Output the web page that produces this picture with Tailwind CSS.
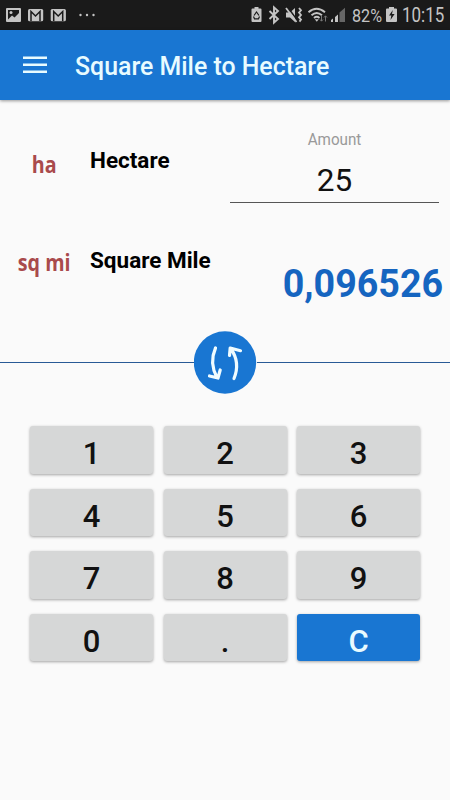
<!DOCTYPE html>
<html lang="en">
<head>
<meta charset="utf-8">
<title>Square Mile to Hectare</title>
<script src="https://cdn.jsdelivr.net/npm/@tailwindcss/browser@4"></script>
</head>
<body class="w-[450px] h-[800px] overflow-hidden bg-[#fafafa] font-[Roboto,sans-serif] flex flex-col">
<div class="h-[30px] shrink-0 bg-[#1a1a1a]">
  <div class="flex h-[30px] items-center text-[#c4c4c4]">
    <svg class="shrink-0" width="345" height="30" viewBox="0 0 345 30" fill="#c4c4c4">
      <path fill-rule="evenodd" d="M7 8h13a1 1 0 0 1 1 1v12a1 1 0 0 1-1 1H7a1 1 0 0 1-1-1V9a1 1 0 0 1 1-1zM8 10v9.500l4-4 2.500 2 4.500-4.500V10z"/>
      <circle cx="11" cy="12.500" r="1.500"/>
      <g id="mail"><rect x="28" y="9" width="15.200" height="12.300" rx="1.500"/><path d="M31 21V11.500L35.500 16l4.500-4.500V21" fill="none" stroke="#1a1a1a" stroke-width="1.500"/></g>
      <use href="#mail" x="22.700"/>
      <circle cx="80.500" cy="15" r="1.200"/><circle cx="87" cy="15" r="1.200"/><circle cx="93.500" cy="15" r="1.200"/>
      <path d="M252.500 8.500h2V7h4v1.500h2a1 1 0 0 1 1 1V21a1 1 0 0 1-1 1h-8a1 1 0 0 1-1-1V9.500a1 1 0 0 1 1-1z"/>
      <path d="M254 15.500l2.500-3.500 2.500 3.500M259.500 16.500l-1 2.300h-4l-1-2.300" fill="none" stroke="#1a1a1a" stroke-width="1.200"/>
      <path d="M269.500 11l8.500 8-4 3.700V7.300l4 3.700-8.500 8" fill="none" stroke="#c4c4c4" stroke-width="1.900"/>
      <path d="M286 12.500h4L295 8v14l-5-4.500H286z"/>
      <path d="M287.500 7l10 13.500" stroke="#1a1a1a" stroke-width="1.500"/>
      <path d="M286 8l10.500 14M299 8l2 2.300-2 2.300 2 2.400-2 2.300 2 2.300-1.500 2" fill="none" stroke="#c4c4c4" stroke-width="1.800"/>
      <g fill="none" stroke="#c4c4c4" stroke-width="1.900"><path d="M308.500 12.200q8-7 16.500 0M311.500 15.200q5.200-4.500 10.500 0M314 18q2.700-2.300 5.500 0"/></g>
      <path d="M314.800 19.200h4l-2 2.600z"/>
      <path d="M321.500 15.500v5.500M320 19.500l1.500 1.700 1.500-1.700M325.500 21.500v-5.500M324 17.500l1.500-1.700 1.500 1.700" stroke="#777" fill="none"/>
      <path d="M331 22v-2l2-1.500V22zM335 22v-5l3-2.500V22z"/><path d="M339.500 22v-9.500l6.500-5.500V22z" fill="#666"/>
    </svg>
    <span class="ml-[7px] w-[34px] pt-[2px] text-[19px] leading-[28px] origin-left scale-x-[0.85] whitespace-nowrap">82%</span>
    <svg class="shrink-0 overflow-visible" width="12" height="16" viewBox="0 0 12 16"><path d="M1 1.500h2V0h5v1.500h2q1 0 1 1V14q0 1-1 1H1q-1 0-1-1V2.500q0-1 1-1z" fill="#c4c4c4"/><path d="M6.800 3L3 8.500h2.300L4.500 13 8.600 7H6z" fill="#1a1a1a"/></svg>
    <span class="ml-[4px] pt-[1px] text-[19.500px] origin-left scale-x-[0.87] whitespace-nowrap">10:15</span>
  </div>
</div>
<header class="relative h-[70px] shrink-0 bg-[#1976d2] shadow-[0_1px_3px_rgba(0,0,0,0.4)] flex items-center pl-[23px]">
  <svg width="24" height="18" viewBox="0 0 24 18" fill="#e8fbff"><path d="M0 .5h24v2.500H0zM0 7.500h24v2.500H0zM0 14.500h24v2.500H0z"/></svg>
  <h1 class="ml-[28px] pt-[3px] text-[25px] font-medium text-[#e8fbff] whitespace-nowrap origin-left scale-x-[0.995]">Square Mile to Hectare</h1>
</header>
<section class="h-[126px] shrink-0 flex">
  <div class="w-[88px] pt-[49px] text-center leading-[30px] text-[24px] font-bold text-[#a94a4c] font-['Open_Sans',sans-serif]"><span class="inline-block scale-x-[0.82]">ha</span></div>
  <div class="w-[142px] pl-[2px] pt-[45px] text-[22.500px] leading-[30px] font-bold text-black">Hectare</div>
  <div class="w-[209px] pt-[30px] text-center">
    <div class="text-[16px] leading-[20px] text-[#999] scale-x-[0.95]">Amount</div>
    <div class="h-[53px] pt-[10px] border-b border-[#555] text-[31.500px] leading-[42px] text-[#111]">25</div>
  </div>
</section>
<section class="h-[105px] shrink-0 flex">
  <div class="w-[88px] pt-[21px] text-center leading-[30px] text-[24px] font-bold text-[#a94a4c] font-['Open_Sans',sans-serif] whitespace-nowrap"><span class="inline-block -mx-4 scale-x-[0.82]">sq mi</span></div>
  <div class="w-[142px] pl-[2px] pt-[19px] text-[22.500px] leading-[30px] font-bold text-black whitespace-nowrap">Square Mile</div>
  <div class="flex-1 pr-[7px] pt-[35px] text-right text-[38px] leading-[46px] font-bold text-[#1565c0] origin-right scale-x-[0.99]">0,096526</div>
</section>
<div class="h-[63px] shrink-0 flex items-center">
  <div class="flex-1 h-[1.500px] bg-[#285a96]"></div>
  <svg width="63" height="63" viewBox="0 0 63 63"><circle cx="31" cy="31.500" r="31.200" fill="#1976d2"/><g fill="none" stroke="#f0fcff" stroke-width="3.200" stroke-linecap="round" stroke-linejoin="round"><path d="M21.500 17q-6.500 15 1.500 29.500M15.500 45l8.500 2 2.200-8M40 47.500q6.500-16-3-29.500M35.500 24.500l.700-7.500 10.300 2.700"/></g></svg>
  <div class="flex-1 h-[1.500px] bg-[#285a96]"></div>
</div>
<main class="mt-[32px] ml-[30px] w-[390px] grid grid-cols-3 gap-x-[10.500px] gap-y-[15px] text-[31px] font-medium text-[#111] *:h-[47.500px] *:rounded-[3px] *:bg-[#d6d7d7] *:shadow-[0_1px_3px_rgba(0,0,0,0.35)] *:pt-[5px]">
  <button>1</button><button>2</button><button>3</button>
  <button>4</button><button>5</button><button>6</button>
  <button>7</button><button>8</button><button>9</button>
  <button>0</button><button>.</button><button class="bg-[#1976d2]! text-[#e8fbff]">C</button>
</main>
</body>
</html>
